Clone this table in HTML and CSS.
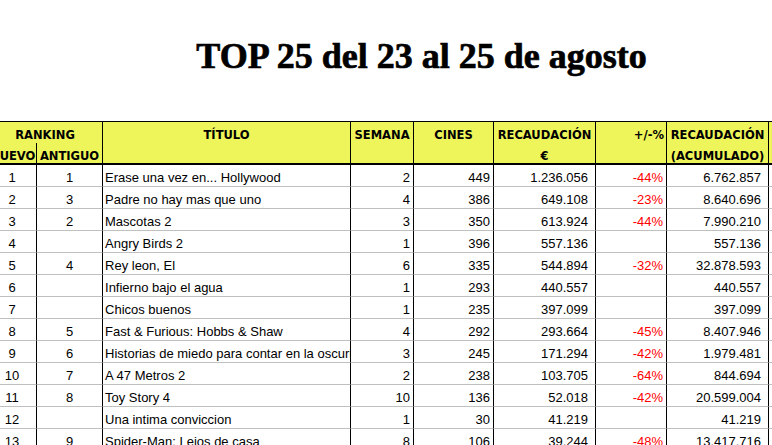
FILE: index.html
```html
<!DOCTYPE html>
<html lang="es">
<head>
<meta charset="utf-8">
<title>TOP 25 del 23 al 25 de agosto</title>
<link rel="stylesheet" href="styles.css">
</head>
<body>
<div class="sheet">
  <h1 class="title">TOP 25 del 23 al 25 de agosto</h1>
  <table class="ranking">
    <colgroup>
      <col class="c-new"><col class="c-old"><col class="c-title"><col class="c-week"><col class="c-cines"><col class="c-money"><col class="c-pct"><col class="c-total"><col class="c-extra">
    </colgroup>
    <thead>
      <tr class="h1">
        <th colspan="2" class="ctr">RANKING</th>
        <th rowspan="2" class="ctr span">TÍTULO</th>
        <th rowspan="2" class="ctr span">SEMANA</th>
        <th rowspan="2" class="ctr span">CINES</th>
        <th class="ctr">RECAUDACIÓN</th>
        <th rowspan="2" class="rgt span">+/-%</th>
        <th class="ctr">RECAUDACIÓN</th>
        <th rowspan="2" class="span"></th>
      </tr>
      <tr class="h2">
        <th class="ctr">NUEVO</th>
        <th class="ctr">ANTIGUO</th>
        <th class="ctr">€</th>
        <th class="ctr">(ACUMULADO)</th>
      </tr>
    </thead>
    <tbody>
      <tr><td class="ctr">1</td><td class="ctr">1</td><td class="film">Erase una vez en... Hollywood</td><td class="num">2</td><td class="num">449</td><td class="money">1.236.056</td><td class="pct">-44%</td><td class="money">6.762.857</td><td></td></tr>
      <tr><td class="ctr">2</td><td class="ctr">3</td><td class="film">Padre no hay mas que uno</td><td class="num">4</td><td class="num">386</td><td class="money">649.108</td><td class="pct">-23%</td><td class="money">8.640.696</td><td></td></tr>
      <tr><td class="ctr">3</td><td class="ctr">2</td><td class="film">Mascotas 2</td><td class="num">3</td><td class="num">350</td><td class="money">613.924</td><td class="pct">-44%</td><td class="money">7.990.210</td><td></td></tr>
      <tr><td class="ctr">4</td><td class="ctr"></td><td class="film">Angry Birds 2</td><td class="num">1</td><td class="num">396</td><td class="money">557.136</td><td class="pct"></td><td class="money">557.136</td><td></td></tr>
      <tr><td class="ctr">5</td><td class="ctr">4</td><td class="film">Rey leon, El</td><td class="num">6</td><td class="num">335</td><td class="money">544.894</td><td class="pct">-32%</td><td class="money">32.878.593</td><td></td></tr>
      <tr><td class="ctr">6</td><td class="ctr"></td><td class="film">Infierno bajo el agua</td><td class="num">1</td><td class="num">293</td><td class="money">440.557</td><td class="pct"></td><td class="money">440.557</td><td></td></tr>
      <tr><td class="ctr">7</td><td class="ctr"></td><td class="film">Chicos buenos</td><td class="num">1</td><td class="num">235</td><td class="money">397.099</td><td class="pct"></td><td class="money">397.099</td><td></td></tr>
      <tr><td class="ctr">8</td><td class="ctr">5</td><td class="film">Fast &amp; Furious: Hobbs &amp; Shaw</td><td class="num">4</td><td class="num">292</td><td class="money">293.664</td><td class="pct">-45%</td><td class="money">8.407.946</td><td></td></tr>
      <tr><td class="ctr">9</td><td class="ctr">6</td><td class="film">Historias de miedo para contar en la oscuridad</td><td class="num">3</td><td class="num">245</td><td class="money">171.294</td><td class="pct">-42%</td><td class="money">1.979.481</td><td></td></tr>
      <tr><td class="ctr">10</td><td class="ctr">7</td><td class="film">A 47 Metros 2</td><td class="num">2</td><td class="num">238</td><td class="money">103.705</td><td class="pct">-64%</td><td class="money">844.694</td><td></td></tr>
      <tr><td class="ctr">11</td><td class="ctr">8</td><td class="film">Toy Story 4</td><td class="num">10</td><td class="num">136</td><td class="money">52.018</td><td class="pct">-42%</td><td class="money">20.599.004</td><td></td></tr>
      <tr><td class="ctr">12</td><td class="ctr"></td><td class="film">Una intima conviccion</td><td class="num">1</td><td class="num">30</td><td class="money">41.219</td><td class="pct"></td><td class="money">41.219</td><td></td></tr>
      <tr><td class="ctr">13</td><td class="ctr">9</td><td class="film">Spider-Man: Lejos de casa</td><td class="num">8</td><td class="num">106</td><td class="money">39.244</td><td class="pct">-48%</td><td class="money">13.417.716</td><td></td></tr>
    </tbody>
  </table>
</div>
</body>
</html>
```

FILE: styles.css
```css
html, body {
  margin: 0;
  padding: 0;
  background: #ffffff;
  overflow: hidden;
}

.sheet {
  width: 867px;
  margin-left: -12px;
}

.title {
  margin: 36px 0 45px;
  font-family: "Liberation Serif", "Times New Roman", serif;
  font-weight: bold;
  font-size: 36px;
  line-height: 40px;
  text-align: center;
  color: #000;
  -webkit-text-stroke: 0.7px #000;
}

.ranking {
  width: 867px;
  table-layout: fixed;
  border-collapse: separate;
  border-spacing: 0;
  font-family: "Liberation Sans", Arial, sans-serif;
  font-size: 13px;
  color: #000;
}

.c-new { width: 49px; }
.c-old { width: 66px; }
.c-title { width: 248px; }
.c-week { width: 63px; }
.c-cines { width: 80px; }
.c-money { width: 102px; }
.c-pct { width: 71px; }
.c-total { width: 102px; }
.c-extra { width: 86px; }

.ranking th {
  background: #eef55a;
  font-family: "DejaVu Sans Condensed", "DejaVu Sans", sans-serif;
  font-weight: bold;
  font-size: 12.8px;
  padding: 0 2px;
  border-right: 1px solid #000;
  white-space: nowrap;
  overflow: hidden;
}

.ranking .h1 th {
  border-top: 1px solid #000;
  padding-top: 5px;
  line-height: 16px;
  vertical-align: top;
}

.ranking .h2 th {
  padding-top: 6px;
  line-height: 14px;
  border-bottom: 2px solid #000;
}

.ranking th.span {
  border-bottom: 2px solid #000;
}

.ranking td {
  padding: 5px 3px 0;
  line-height: 16px;
  border-right: 1px solid #000;
  border-bottom: 1px solid #c0c0c0;
  white-space: nowrap;
  overflow: hidden;
}

.ctr { text-align: center; }
.rgt { text-align: right; }

.ranking td.film { padding-left: 2px; }
.ranking td.num { text-align: right; }
.ranking td.money { text-align: right; padding-right: 7px; }
.ranking td.pct { text-align: right; color: #ff0000; }
```
